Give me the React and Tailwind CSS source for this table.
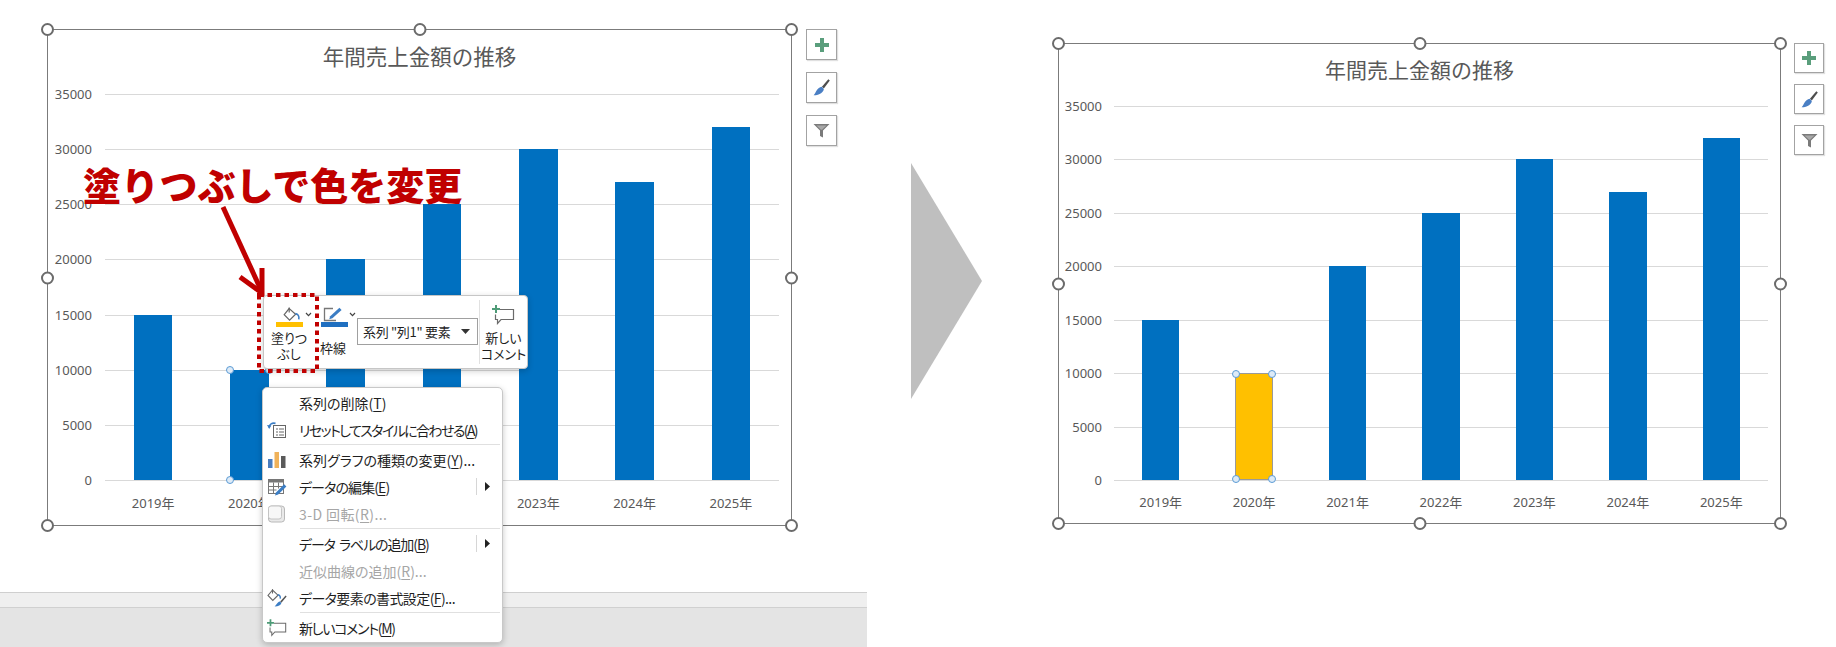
import React from 'react';

const years = ['2019年', '2020年', '2021年', '2022年', '2023年', '2024年', '2025年'];
const values = [15000, 10000, 20000, 25000, 30000, 27000, 32000];
const ticks = ['35000', '30000', '25000', '20000', '15000', '10000', '5000', '0'];
const MAX = 35000;

const leftChart = {
  size: 'w-[745px] h-[497px]',
  titleRow: 'h-[53px] text-[21.5px]',
  plotRow: 'mt-[11px] pr-[12px]',
  axis: 'w-[57px] pr-[13px]',
  plotH: 'h-[387px]',
  labels: 'mt-[13px] ml-[57px] mr-[12px]',
};

const rightChart = {
  size: 'w-[723px] h-[481px]',
  titleRow: 'h-[51px] text-[21px]',
  plotRow: 'mt-[11px] pr-[12px]',
  axis: 'w-[55px] pr-[12px]',
  plotH: 'h-[375px]',
  labels: 'mt-[12px] ml-[55px] mr-[12px]',
};

const Handle = ({ className }) => (
  <span className={`absolute w-[13px] h-[13px] rounded-full border-2 border-[#6b6b6b] bg-white ${className}`} />
);

const PointHandle = ({ className }) => (
  <span className={`absolute w-[8px] h-[8px] rounded-full border border-[#5b9bd5] bg-[#deebf7] ${className}`} />
);

const PointHandles = () => (
  <>
    <PointHandle className="-left-[4px] -top-[4px]" />
    <PointHandle className="-right-[4px] -top-[4px]" />
    <PointHandle className="-left-[4px] -bottom-[4px]" />
    <PointHandle className="-right-[4px] -bottom-[4px]" />
  </>
);

const Chart = ({ cfg, yellow }) => (
  <div className={`relative shrink-0 flex flex-col bg-white border-[1.5px] border-[#7b7b7b] ${cfg.size}`}>
    <Handle className="-left-[7px] -top-[7px]" />
    <Handle className="left-1/2 -translate-x-1/2 -top-[7px]" />
    <Handle className="-right-[7px] -top-[7px]" />
    <Handle className="-left-[7px] top-1/2 -translate-y-1/2" />
    <Handle className="-right-[7px] top-1/2 -translate-y-1/2" />
    <Handle className="-left-[7px] -bottom-[7px]" />
    <Handle className="left-1/2 -translate-x-1/2 -bottom-[7px]" />
    <Handle className="-right-[7px] -bottom-[7px]" />

    <div className={`flex items-center justify-center text-[#595959] font-['Noto_Sans_CJK_JP',sans-serif] ${cfg.titleRow}`}>
      年間売上金額の推移
    </div>

    <div className={`flex ${cfg.plotRow}`}>
      <div className={`flex flex-col justify-between shrink-0 ${cfg.axis} ${cfg.plotH}`}>
        {ticks.map((t) => (
          <div key={t} className="h-px flex items-center justify-end text-[13px] leading-none text-[#595959]">
            {t}
          </div>
        ))}
      </div>
      <div className={`relative flex-1 ${cfg.plotH}`}>
        <div className="absolute inset-0 flex flex-col justify-between">
          {ticks.map((t) => (
            <div key={t} className="h-px bg-[#d9d9d9]" />
          ))}
        </div>
        <div className="absolute left-0 right-0 top-0 bottom-px grid grid-cols-7">
          {values.map((v, i) => (
            <div key={i} className="flex items-end justify-center">
              <div
                className={
                  i === 1 && yellow
                    ? 'relative w-[40%] bg-[#ffc000] border border-[#9a9a9a]'
                    : 'relative w-[40%] bg-[#0070c0]'
                }
                style={{ height: `${(v / MAX) * 100}%` }}
              >
                {i === 1 && <PointHandles />}
              </div>
            </div>
          ))}
        </div>
      </div>
    </div>

    <div className={`grid grid-cols-7 ${cfg.labels}`}>
      {years.map((y) => (
        <div key={y} className="text-center text-[13px] leading-[18px] text-[#595959]">
          {y}
        </div>
      ))}
    </div>
  </div>
);

const PlusIcon = () => (
  <svg width="14" height="14" viewBox="0 0 14 14">
    <path d="M5 0h4v5h5v4H9v5H5V9H0V5h5z" fill="#5a9e7c" />
  </svg>
);

const BrushIcon = () => (
  <svg width="17" height="17" viewBox="0 0 16 16">
    <path d="M14.4 0.2 L15.8 1.4 L10.2 9 L8.4 7.4 Z" fill="#4d4d4d" />
    <path d="M8.2 7.4 L10.2 9.3 C9.8 12.4 6.8 14.8 0.6 15.4 C2.6 13.2 3 10.4 5.2 8.8 C6.2 8 7.2 7.6 8.2 7.4 Z" fill="#4a7fc4" />
  </svg>
);

const FunnelIcon = () => (
  <svg width="17" height="15" viewBox="0 0 17 15">
    <path d="M0.5 1 H16.5 L10 7.5 V14.5 L7 13 V7.5 Z" fill="#7a7a7a" />
    <path d="M3.5 2.5 H13.5 L9 6.8 H8 Z" fill="#a8a8a8" />
  </svg>
);

const ChartButtons = ({ gap, size }) => (
  <div className={`flex flex-col ${gap}`}>
    {[<PlusIcon key="p" />, <BrushIcon key="b" />, <FunnelIcon key="f" />].map((icon, i) => (
      <div
        key={i}
        className={`flex items-center justify-center bg-white border border-[#a3a3a3] shadow-[1px_1px_1px_rgba(0,0,0,0.12)] ${size}`}
      >
        {icon}
      </div>
    ))}
  </div>
);

const Chevron = () => (
  <svg width="7" height="5" viewBox="0 0 7 5">
    <path d="M1 1 L3.5 3.6 L6 1" stroke="#444" strokeWidth="1.2" fill="none" />
  </svg>
);

const BucketIcon = () => (
  <svg width="18" height="15" viewBox="0 0 18 15">
    <path d="M6.2 1.5 L1.2 7.6 L6.6 13.2 L12.6 7.2 Z" fill="none" stroke="#666" strokeWidth="1.2" />
    <path d="M6.2 0.5 V5.5" stroke="#666" strokeWidth="1.2" />
    <path d="M12.4 6.6 C15 7 16.4 9 15.8 12.4" stroke="#3b7dc4" strokeWidth="1.6" fill="none" />
  </svg>
);

const PenIcon = () => (
  <svg width="22" height="15" viewBox="0 0 22 15">
    <path d="M10 1.5 H1.5 V13.5 H13" fill="none" stroke="#777" strokeWidth="1.3" />
    <path d="M6.2 12.2 L7.2 9.2 L16.4 0.8 L18.6 3 L9.4 11.2 Z" fill="#3b7dc4" />
  </svg>
);

const CommentIcon = ({ w = 23, h = 20 }) => (
  <svg width={w} height={h} viewBox="0 0 23 20">
    <path d="M8 4.5 H21.5 V14.5 H9 L5.5 18.5 V14.5 H3.5 V9.5" fill="none" stroke="#6b6b6b" strokeWidth="1.2" />
    <path d="M3 0 h2 v3 h3 v2 h-3 v3 h-2 v-3 h-3 v-2 h3z" fill="#4e9b77" />
  </svg>
);

const ResetIcon = () => (
  <svg width="20" height="18" viewBox="0 0 20 18">
    <rect x="6.5" y="4.5" width="12" height="12" fill="#fff" stroke="#666" />
    <path d="M9 8h2M12 8h5M9 11h2M12 11h5M9 14h2M12 14h5" stroke="#666" />
    <path d="M2 6.5 C2.4 3 5 1.6 8.5 2.4" stroke="#3b7dc4" strokeWidth="1.6" fill="none" />
    <path d="M0 4 L2.2 8 L4.4 4.6 Z" fill="#3b7dc4" />
  </svg>
);

const ChartTypeIcon = () => (
  <svg width="20" height="18" viewBox="0 0 20 18">
    <rect x="1" y="8" width="4.5" height="9" fill="#4a7dbf" />
    <rect x="7.5" y="1" width="4.5" height="16" fill="#f0b25a" />
    <rect x="14" y="5" width="4.5" height="12" fill="#5a5a5a" />
  </svg>
);

const EditDataIcon = () => (
  <svg width="20" height="18" viewBox="0 0 20 18">
    <rect x="1.5" y="1.5" width="15" height="14" fill="#fff" stroke="#777" />
    <rect x="1.5" y="1.5" width="15" height="3" fill="#777" />
    <path d="M1.5 8.5h15M1.5 12h8M6.5 4.5v11M11.5 4.5v6" stroke="#777" />
    <path d="M8 17.5 L9 14.4 L17.2 6.2 L19.4 8.4 L11.2 16.6 Z" fill="#3b7dc4" />
  </svg>
);

const ThreeDIcon = () => (
  <svg width="20" height="18" viewBox="0 0 20 18">
    <rect x="1.5" y="1" width="16" height="16" rx="3" fill="#e9e9e9" stroke="#b8b8b8" />
    <rect x="1.5" y="1" width="13" height="13" rx="2.5" fill="#f7f7f7" stroke="#c4c4c4" />
  </svg>
);

const FormatIcon = () => (
  <svg width="20" height="18" viewBox="0 0 20 18">
    <path d="M5.5 1 L1 6.5 L5.8 11.4 L11 6.2 Z" fill="#fff" stroke="#666" strokeWidth="1.1" />
    <path d="M5.5 0.2 V4.5" stroke="#666" strokeWidth="1.1" />
    <path d="M10.8 5.8 C13 6.2 13.6 7.6 13.2 9.6" stroke="#3b7dc4" strokeWidth="1.4" fill="none" />
    <path d="M18.6 6.6 L19.6 7.6 L14.4 13.8 L13.2 12.6 Z" fill="#555" />
    <path d="M13 12.6 L14.4 14 C13.8 16 11.6 17.4 7.6 17.6 C9 16.2 9.6 14.6 11 13.4 C11.6 12.9 12.3 12.7 13 12.6 Z" fill="#3b7dc4" />
  </svg>
);

const SubArrow = () => (
  <div className="ml-auto flex items-center mr-[12px]">
    <div className="w-px h-[17px] bg-[#d6d6d6]" />
    <svg width="5" height="9" viewBox="0 0 5 9" className="ml-[8px]">
      <path d="M0 0 L5 4.5 L0 9 Z" fill="#222" />
    </svg>
  </div>
);

const menu = [
  { label: '系列の削除', k: 'T', track: '' },
  { label: 'リセットしてスタイルに合わせる', k: 'A', icon: <ResetIcon />, sep: true, track: 'tracking-[-1.6px]' },
  { label: '系列グラフの種類の変更', k: 'Y', dots: true, icon: <ChartTypeIcon />, track: '' },
  { label: 'データの編集', k: 'E', icon: <EditDataIcon />, sub: true, track: 'tracking-[-0.9px]' },
  { label: '3-D 回転', k: 'R', dots: true, off: true, icon: <ThreeDIcon />, sep: true, track: 'tracking-[0.4px]' },
  { label: 'データ\u00a0\u00a0ラベルの追加', k: 'B', sub: true, track: 'tracking-[-1.1px]' },
  { label: '近似曲線の追加', k: 'R', dots: true, off: true, track: '' },
  { label: 'データ要素の書式設定', k: 'F', dots: true, icon: <FormatIcon />, sep: true, track: 'tracking-[-0.6px]' },
  { label: '新しいコメント', k: 'M', icon: <CommentIcon w={20} h={18} />, track: 'tracking-[-1.3px]' },
];

const ContextMenu = () => (
  <div className="absolute left-[262px] top-[387px] w-[241px] h-[256px] py-px flex flex-col bg-white border border-[#c8c8c8] rounded-[5px] shadow-[0_2px_6px_rgba(0,0,0,0.22)] font-['Noto_Sans_CJK_JP',sans-serif] [font-feature-settings:'palt'] text-[14px] leading-[18px]">
    {menu.map((m, i) => (
      <React.Fragment key={i}>
        <div className={`h-[27px] shrink-0 flex items-center ${m.off ? 'text-[#a6a6a6]' : 'text-[#1f1f1f]'}`}>
          <div className="w-[36px] pl-[4px] flex items-center">{m.icon}</div>
          <span className={`whitespace-nowrap ${m.track}`}>
            {m.label}(<u className="underline-offset-2">{m.k}</u>){m.dots && '...'}
          </span>
          {m.sub && <SubArrow />}
        </div>
        {m.sep && (
          <div className="h-[3px] shrink-0 flex items-center ml-[37px] mr-[2px]">
            <div className="h-px w-full bg-[#e0e0e0]" />
          </div>
        )}
      </React.Fragment>
    ))}
  </div>
);

const MiniToolbar = () => (
  <div className="absolute left-[263px] top-[295px] w-[265px] h-[74px] flex items-start bg-white border border-[#c6c6c6] rounded-[4px] shadow-[0_2px_6px_rgba(0,0,0,0.2)] font-['Noto_Sans_CJK_JP',sans-serif] [font-feature-settings:'palt'] text-[13px] text-[#1f1f1f]">
    <div className="ml-[3px] w-[44px] flex flex-col items-center">
      <div className="self-start ml-[16px] mt-[11px] h-[14px] flex items-center gap-[4px]">
        <BucketIcon />
        <Chevron />
      </div>
      <div className="w-[27px] h-[5px] mt-px bg-[#ffc000]" />
      <div className="mt-[3px] text-center leading-[16px]">
        塗りつ
        <br />
        ぶし
      </div>
    </div>
    <div className="ml-[8px] w-[38px] flex flex-col items-start">
      <div className="ml-[4px] mt-[11px] h-[14px] flex items-center gap-[4px]">
        <PenIcon />
        <Chevron />
      </div>
      <div className="ml-[2px] w-[27px] h-[5px] mt-px bg-[#1f6fc0]" />
      <div className="ml-[1px] mt-[13px] leading-[16px] whitespace-nowrap">枠線</div>
    </div>
    <div className="mt-[22px] w-[121px] h-[27px] pl-[5px] pr-[7px] flex items-center justify-between border border-[#a0a0a0] text-[13px] leading-none whitespace-nowrap">
      <span className="tracking-[-0.3px]">系列 "列1" 要素</span>
      <svg width="9" height="5" viewBox="0 0 9 5" className="shrink-0">
        <path d="M0 0 H9 L4.5 5 Z" fill="#333" />
      </svg>
    </div>
    <div className="ml-px w-px self-stretch my-[4px] bg-[#e1e1e1]" />
    <div className="w-[47px] flex flex-col items-center">
      <div className="mt-[9px]">
        <CommentIcon />
      </div>
      <div className="mt-[5px] text-center leading-[16px] whitespace-nowrap">
        新しい
        <br />
        コメント
      </div>
    </div>
  </div>
);

const App = () => {
  return (
    <div className="relative w-[1836px] h-[647px] flex bg-white overflow-hidden font-['Noto_Sans','Noto_Sans_CJK_JP',sans-serif]">
      {/* Before: chart with mini toolbar and context menu */}
      <div className="relative w-[867px] h-full shrink-0 flex flex-col">
        <div className="flex-1 flex items-start pl-[47px] pt-[29px]">
          <Chart cfg={leftChart} />
          <div className="ml-[14px]">
            <ChartButtons gap="gap-[12px]" size="w-[31px] h-[31px]" />
          </div>
        </div>
        <div className="h-[55px] flex flex-col">
          <div className="h-[15px] border-t border-[#cfcfcf] bg-[#efefef]" />
          <div className="flex-1 border-t border-[#d0d0d0] bg-[#e4e4e4]" />
        </div>

        <div className="absolute left-[83px] top-[165px] text-[38px] font-black leading-none whitespace-nowrap text-[#c00000] font-['Noto_Sans_CJK_JP',sans-serif]">
          塗りつぶしで色を変更
        </div>
        <svg className="absolute left-[215px] top-[200px]" width="60" height="100" viewBox="0 0 60 100">
          <path d="M8 7 L46 90" stroke="#c00000" strokeWidth="5" />
          <path d="M25 77 L47 93 L47 68" stroke="#c00000" strokeWidth="5" fill="none" />
        </svg>

        <MiniToolbar />
        <svg className="absolute left-[257px] top-[293px]" width="62" height="80" viewBox="0 0 62 80">
          <rect x="2" y="2" width="58" height="76" fill="none" stroke="#c00000" strokeWidth="4" strokeDasharray="4.5 4" />
        </svg>
        <ContextMenu />
      </div>

      {/* Arrow */}
      <div className="ml-[44px] mt-[163px] shrink-0">
        <svg width="71" height="236" viewBox="0 0 71 236">
          <polygon points="0,0 71,118 0,236" fill="#bfbfbf" />
        </svg>
      </div>

      {/* After: recoloured bar */}
      <div className="ml-[76px] mt-[43px] shrink-0 flex items-start">
        <Chart cfg={rightChart} yellow />
        <div className="ml-[13px]">
          <ChartButtons gap="gap-[11px]" size="w-[30px] h-[30px]" />
        </div>
      </div>
    </div>
  );
};

export default App;
